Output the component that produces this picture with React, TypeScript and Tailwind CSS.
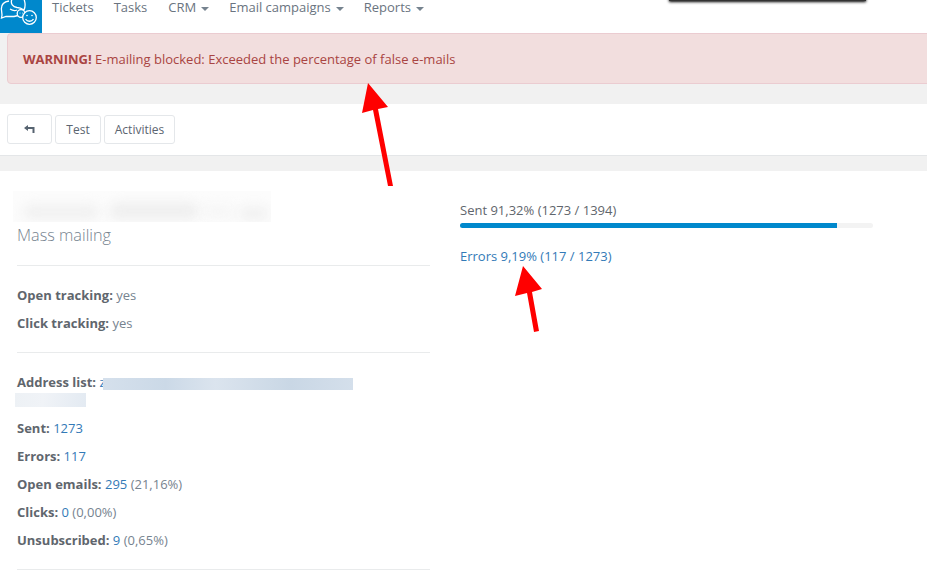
function Caret() {
  return <span className="ml-[5px] inline-block align-middle border-x-4 border-t-4 border-x-transparent border-t-[#76838f]" />;
}

function Logo() {
  return (
    <div className="w-[42px] h-[33px] bg-[#0088cc] overflow-hidden shrink-0">
      <svg width="42" height="33" viewBox="0 0 42 33" fill="none" stroke="#fff" strokeWidth="1.3">
        <path d="M12 -1 C10 4 13 7 17 7.5 C19 7.5 21 8 24 10 C26 6 25 2 24 -1" />
        <path d="M9 1 C3 2 1 6 1.5 10 L2 15 L1.5 18 L6 16.5 L14 16.5 L18 15.5 M10 9 C13 11 15 11 17 10" />
        <circle cx="21" cy="13.5" r="3.8" fill="#0088cc" />
        <circle cx="20" cy="13" r="0.5" fill="#fff" stroke="none" />
        <circle cx="22.5" cy="13" r="0.5" fill="#fff" stroke="none" />
        <circle cx="29.5" cy="17.5" r="6.8" fill="#0088cc" />
        <circle cx="27" cy="15.5" r="0.8" fill="#fff" stroke="none" />
        <circle cx="32" cy="15.5" r="0.8" fill="#fff" stroke="none" />
        <path d="M25.5 19 C27.5 22 31.5 22 33.5 19" />
      </svg>
    </div>
  );
}

function BackIcon() {
  return (
    <svg width="11" height="9" viewBox="0 0 11 9" fill="none">
      <path d="M0 3 L4 0 L4 2 L10.5 2 L10.5 8 L8.5 8 L8.5 4 L4 4 L4 6 Z" fill="#566370" />
    </svg>
  );
}

function Row({ label, children }: { label: string; children?: React.ReactNode }) {
  return (
    <p className="h-[28px] leading-[28px] whitespace-nowrap">
      <b className="font-bold text-[#5f666d]">{label}</b> {children}
    </p>
  );
}

function Num({ children }: { children: React.ReactNode }) {
  return <a className="text-[#337ab7]">{children}</a>;
}

export default function App() {
  return (
    <div className="relative h-[571px] w-[927px] overflow-hidden bg-white text-[13px] text-[#76838f] font-['Open_Sans',sans-serif]">
      <nav className="flex h-[33px] bg-white">
        <Logo />
        <ul className="flex items-start gap-[20px] pl-[10px] leading-[15px] text-[#6a7480]">
          <li>Tickets</li>
          <li>Tasks</li>
          <li className="ml-px">CRM<Caret /></li>
          <li>Email campaigns<Caret /></li>
          <li>Reports<Caret /></li>
        </ul>
      </nav>

      <div className="h-[71px] bg-[#f1f1f1] pl-[7px]">
        <div className="h-[51px] -mr-6 flex items-center rounded-[4px] border border-[#ebccd1] bg-[#f2dede] pl-[15px] pt-[2px] text-[#a94442]">
          <b className="font-bold">WARNING!</b>&nbsp;E-mailing blocked: Exceeded the percentage of false e-mails
        </div>
      </div>

      <div className="flex h-[52px] items-center gap-[3px] border-b border-[#e4e6e8] pl-[7px] pb-[1px] text-[12px] text-[#5b6570]">
        <button className="flex h-[30px] w-[45px] items-center justify-center rounded-[3px] border border-[#e4e7ea]">
          <BackIcon />
        </button>
        <button className="h-[29px] w-[46px] rounded-[3px] border border-[#e4e7ea] pt-[1px]">Test</button>
        <button className="h-[29px] w-[71px] rounded-[3px] border border-[#e4e7ea] pt-[1px]">Activities</button>
      </div>
      <div className="h-[15px] bg-[#f1f1f1]" />

      <div className="grid grid-cols-[413px_413px] gap-x-[30px] pl-[17px]">
        <section>
          <div className="relative -ml-[4px] mt-[20px] h-[31px] w-[258px] overflow-hidden bg-[#fcfcfc]">
            <div className="absolute left-[10px] top-[14px] h-[14px] w-[76px] rounded-full bg-[#f0f0f0] blur-[6px]" />
            <div className="absolute left-[96px] top-[12px] h-[16px] w-[90px] rounded-full bg-[#eeeeee] blur-[6px]" />
            <div className="absolute left-[190px] top-[15px] h-[11px] w-[30px] rounded-full bg-[#f5f5f5] blur-[6px]" />
            <div className="absolute left-[226px] top-[16px] h-[13px] w-[30px] rounded-full bg-[#f0f0f0] blur-[6px]" />
          </div>
          <h2 className="mt-[2px] text-[16.25px] leading-[22px] font-light text-[#76838f]">Mass mailing</h2>
          <hr className="mt-[19px] border-[#e9ebec]" />
          <div className="mt-[15px]">
            <Row label="Open tracking:">yes</Row>
            <Row label="Click tracking:">yes</Row>
          </div>
          <hr className="mt-[15px] border-[#e9ebec]" />
          <div className="relative mt-[15px] h-[45px]">
            <p className="leading-[28px] whitespace-nowrap">
              <b className="font-bold text-[#5f666d]">Address list:</b> <span className="text-[#337ab7]">z</span>
            </p>
            <div className="absolute left-[86px] top-[10px] h-[12px] w-[250px] bg-[linear-gradient(90deg,#d5e0ec_0%,#cbd9e7_25%,#dbe4ee_45%,#c9d7e5_75%,#d4dfeb_100%)]" />
            <div className="absolute -left-[2px] top-[25px] h-[14px] w-[71px] bg-[linear-gradient(100deg,#edf1f5_0%,#f0f3f7_40%,#e3eaf2_100%)]" />
          </div>
          <div className="mt-[1px]">
            <Row label="Sent:"><Num>1273</Num></Row>
            <Row label="Errors:"><Num>117</Num></Row>
            <Row label="Open emails:"><Num>295</Num> (21,16%)</Row>
            <Row label="Clicks:"><Num>0</Num> (0,00%)</Row>
            <Row label="Unsubscribed:"><Num>9</Num> (0,65%)</Row>
          </div>
          <hr className="mt-[15px] border-[#e9ebec]" />
        </section>

        <section className="pt-[30px]">
          <p className="leading-[18px] text-[#5f666d]">Sent 91,32% (1273 / 1394)</p>
          <div className="mt-[4px] h-[5px] overflow-hidden rounded-full bg-[#f3f3f3]">
            <div className="h-full w-[91.32%] bg-[#0088cc]" />
          </div>
          <p className="mt-[19px] leading-[18px] text-[#337ab7]">Errors 9,19% (117 / 1273)</p>
        </section>
      </div>

      <div className="absolute left-[669px] -top-[4px] h-[5px] w-[197px] bg-[#333] shadow-[0_1px_3px_#000]" />

      <svg className="absolute left-[355px] top-[80px]" width="45" height="110">
        <polygon points="13,3 33,27 23,29 38,106 33,106 18,30 7,33" fill="#ff0000" />
      </svg>
      <svg className="absolute left-[510px] top-[262px]" width="40" height="72">
        <polygon points="13,4 32,27 22,30 29,69 24,70 17,31 5,34" fill="#ff0000" />
      </svg>
    </div>
  );
}
